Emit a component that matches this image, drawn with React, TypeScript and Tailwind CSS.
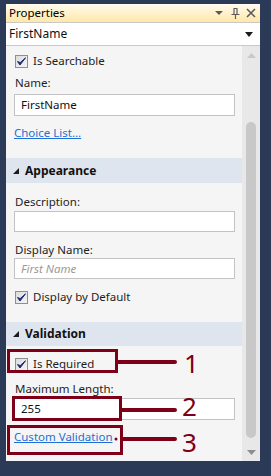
import React from "react";

const font = { fontFamily: '"Noto Sans", "Open Sans", sans-serif' };

const Check = () => (
  <span className="w-[13px] h-[13px] border border-[#8e8f8f] bg-gradient-to-br from-[#dcdcdc] to-[#f4f4f4] flex items-center justify-center shrink-0">
    <svg width="9" height="9" viewBox="0 0 9 9">
      <path d="M0.5 4.5 L3 8 L8.5 0.8 L3.2 5.6 Z" fill="#1e2d6e" stroke="#1e2d6e" strokeWidth="1" strokeLinejoin="round" />
    </svg>
  </span>
);

const Band = ({ label, cls }: { label: string; cls: string }) => (
  <div className={`bg-[#dfe5ee] flex items-center pl-[7px] gap-[6px] ${cls}`}>
    <svg width="6" height="6" viewBox="0 0 6 6">
      <path d="M6 0 L6 6 L0 6 Z" fill="#1b1b1b" />
    </svg>
    <span className="font-bold text-[12px] text-[#111]">{label}</span>
  </div>
);

const Field = ({ value, cls, placeholder }: { value?: string; cls: string; placeholder?: string }) => (
  <div className={`ml-[8px] w-[221px] bg-white border border-[#c3c3c3] flex items-center pl-[6px] text-[11.5px] ${cls}`}>
    {value ? (
      <span className="text-[#111]">{value}</span>
    ) : (
      <span className="italic text-[#9a9a9a]">{placeholder}</span>
    )}
  </div>
);

const Label = ({ text, cls }: { text: string; cls: string }) => (
  <div className={`pl-[9px] h-[14px] flex items-center text-[11.5px] text-[#1e1e1e] ${cls}`}>{text}</div>
);

const CheckRow = ({ text, cls }: { text: string; cls: string }) => (
  <div className={`pl-[9px] flex items-center gap-[5px] text-[11.5px] text-[#1e1e1e] ${cls}`}>
    <Check />
    <span>{text}</span>
  </div>
);

const Link = ({ text, cls }: { text: string; cls: string }) => (
  <div className={`pl-[8px] flex items-center text-[11.5px] text-[#1e6fd6] underline ${cls}`}>{text}</div>
);

const red = "#7e0018";

export default function App() {
  return (
    <div
      className="w-[271px] h-[476px] bg-[#2a3a57] pt-[4px] pl-[6px] relative overflow-hidden"
      style={font}
    >
      <div className="w-[254px] h-[457px] flex flex-col bg-[#f5f5f5]">
        {/* title bar */}
        <div className="h-[18px] bg-gradient-to-b from-[#fffbef] to-[#ffe8a6] flex items-center pl-[3px] pr-[4px]">
          <span className="text-[11.5px] text-black flex-1">Properties</span>
          <svg width="8" height="5" viewBox="0 0 8 5" className="mr-[8px]">
            <path d="M0 0 L8 0 L4 4 Z" fill="#5b5b5b" />
          </svg>
          <svg width="9" height="11" viewBox="0 0 9 11" className="mr-[6px]">
            <path d="M2.5 0.5 H6.5 M3 0.5 V6.5 M6 0.5 V6.5 M0.5 6.5 H8.5 M4.5 6.5 V11" stroke="#5b5b5b" strokeWidth="1.2" fill="none" />
          </svg>
          <svg width="10" height="10" viewBox="0 0 10 10">
            <path d="M1 1 L9 9 M9 1 L1 9" stroke="#5b5b5b" strokeWidth="1.6" />
          </svg>
        </div>
        {/* combo */}
        <div className="h-[24px] bg-white border-t border-b border-[#c9c9c9] flex items-center pl-[3px] pr-[7px]">
          <span className="text-[12px] text-[#111] flex-1">FirstName</span>
          <svg width="8" height="5" viewBox="0 0 8 5">
            <path d="M0 0 L8 0 L4 5 Z" fill="#1b1b1b" />
          </svg>
        </div>
        {/* body */}
        <div className="flex-1 flex relative">
          <div className="w-[236px] flex flex-col">
            <CheckRow text="Is Searchable" cls="h-[30px]" />
            <Label text="Name:" cls="" />
            <Field value="FirstName" cls="mt-[4px] h-[22px]" />
            <Link text="Choice List..." cls="mt-[8px] h-[18px]" />
            <Band label="Appearance" cls="mt-[16px] h-[25px]" />
            <Label text="Description:" cls="mt-[12px]" />
            <Field cls="mt-[2px] h-[21px]" />
            <Label text="Display Name:" cls="mt-[11px]" />
            <Field placeholder="First Name" cls="mt-[1px] h-[21px]" />
            <CheckRow text="Display by Default" cls="mt-[9px] h-[18px]" />
            <Band label="Validation" cls="mt-[16px] h-[24px]" />
            <CheckRow text="Is Required" cls="mt-[9px] h-[18px]" />
            <Label text="Maximum Length:" cls="mt-[9px]" />
            <Field value="255" cls="mt-[2px] h-[22px]" />
            <Link text="Custom Validation" cls="mt-[8px] h-[18px]" />
          </div>
          {/* scrollbar */}
          <div className="w-[18px] bg-[#e8e8e8] flex flex-col items-center pt-[7px] pb-[6px]">
            <svg width="9" height="5" viewBox="0 0 9 5">
              <path d="M0 5 L9 5 L4.5 0 Z" fill="#c9c9c9" />
            </svg>
            <div className="mt-[64px] w-[10px] h-[316px] rounded-[5px] bg-[#c8c8c8]" />
            <div className="flex-1" />
            <svg width="9" height="5" viewBox="0 0 9 5">
              <path d="M0 0 L9 0 L4.5 5 Z" fill="#8e8e8e" />
            </svg>
          </div>
        </div>
      </div>

      {/* annotations */}
      <div className="absolute left-[7px] top-[349px] w-[111px] h-[24px] border-[3px] border-[#7e0018]" />
      <div className="absolute left-[12px] top-[396px] w-[110px] h-[25px] border-[3px] border-[#7e0018]" />
      <div className="absolute left-[7px] top-[425px] w-[116px] h-[30px] border-[3px] border-[#7e0018]" />
      <svg className="absolute left-0 top-0" width="271" height="476" viewBox="0 0 271 476">
        <path d="M117 362 H175 M121 410 H175 M122 439 H175" stroke={red} strokeWidth="4" strokeLinecap="round" />
        <circle cx="116" cy="439" r="1.5" fill={red} />
      </svg>
      <div className="absolute left-[184px] top-[348px] text-[26px] leading-[30px] text-[#7e0018]">1</div>
      <div className="absolute left-[182px] top-[391px] text-[26px] leading-[30px] text-[#7e0018]">2</div>
      <div className="absolute left-[182px] top-[427px] text-[26px] leading-[30px] text-[#7e0018]">3</div>
    </div>
  );
}
